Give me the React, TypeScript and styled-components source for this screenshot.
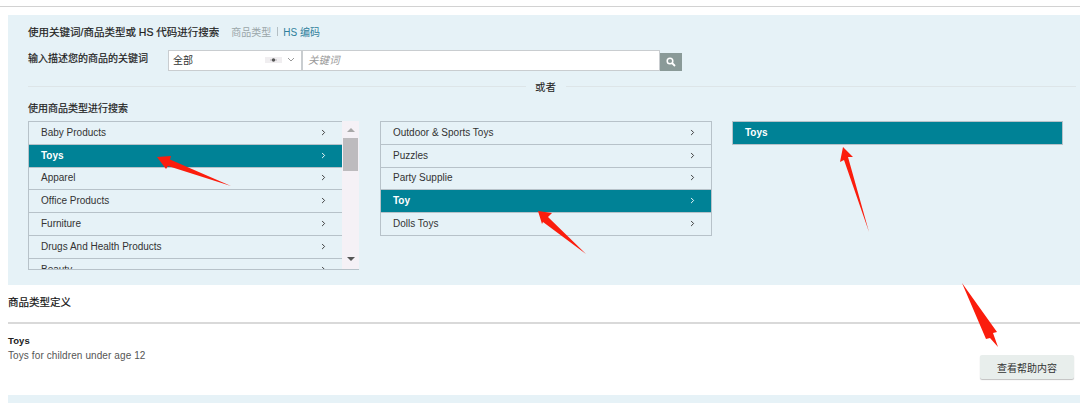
import React from 'react';
import styled, { createGlobalStyle } from 'styled-components';
import { ChevronRight } from 'lucide-react';

const GlobalStyle = createGlobalStyle`
  html, body {
    margin: 0;
    padding: 0;
    background: #fff;
  }
  body {
    font-family: "Liberation Sans", Arial, "Noto Sans CJK SC", sans-serif;
    color: #333;
  }
`;

const Page = styled.div`
  position: relative;
  width: 1080px;
  height: 403px;
  overflow: hidden;
  padding-top: 6px;
  box-sizing: border-box;
`;

const TopRule = styled.div`
  height: 1px;
  background: #d2d2d2;
  margin-bottom: 8px;
`;

const Panel = styled.section`
  box-sizing: border-box;
  height: 270px;
  margin-left: 8px;
  padding: 8px 4px 0 20px;
  background: #e6f2f7;
`;

const TitleRow = styled.div`
  display: flex;
  align-items: center;
  height: 16px;
  font-size: 10px;
`;

const Title = styled.h2`
  margin: 0 12px 0 0;
  font-size: 10.5px;
  font-weight: 400;
  color: #222;
  -webkit-text-stroke: 0.2px #222;
`;

const TabLink = styled.span<{ $active?: boolean }>`
  color: ${(p) => (p.$active ? '#2f7f9c' : '#9aa5a8')};
`;

const TabDivider = styled.span`
  width: 1px;
  height: 9px;
  margin: 0 5px 0 6px;
  background: #b4bfc4;
`;

const SearchRow = styled.div`
  display: flex;
  align-items: flex-start;
  margin-top: 11px;
`;

const SearchLabel = styled.label`
  width: 140px;
  height: 16px;
  margin-top: 1px;
  font-size: 10px;
  line-height: 16px;
  color: #222;
  -webkit-text-stroke: 0.2px #222;
`;

const SelectBox = styled.div`
  box-sizing: border-box;
  display: flex;
  align-items: center;
  width: 134px;
  height: 21px;
  padding: 0 6px 2px 4px;
  background: #fff;
  border: 1px solid #c9cdd0;
  font-size: 10px;
`;

const SelectValue = styled.span`
  flex: 1;
  color: #333;
`;

const SelectMark = styled.svg`
  margin-right: 5px;
`;

const KeywordBox = styled.div`
  box-sizing: border-box;
  width: 358px;
  height: 21px;
  padding-left: 5px;
  background: #fff;
  border: 1px solid #c9cdd0;
  font-size: 10.5px;
  font-style: italic;
  line-height: 19px;
  color: #9a9a9a;
`;

const SearchButton = styled.button`
  display: flex;
  align-items: center;
  justify-content: center;
  width: 22px;
  height: 18px;
  margin-top: 3px;
  padding: 0;
  border: 0;
  background: #8a9a98;
`;

const OrDivider = styled.div`
  display: flex;
  align-items: center;
  height: 14px;
  margin-top: 8px;
  font-size: 10.5px;
  color: #222;
  &::before,
  &::after {
    content: '';
    height: 1px;
    background: #dde5e8;
  }
  &::before {
    width: 498px;
    margin-right: 9px;
  }
  &::after {
    flex: 1;
    margin-left: 10px;
  }
`;

const SectionLabel = styled.div`
  margin-top: 9px;
  height: 14px;
  font-size: 10px;
  line-height: 14px;
  color: #222;
  -webkit-text-stroke: 0.2px #222;
`;

const Columns = styled.div`
  display: grid;
  grid-template-columns: 332px 332px 331px;
  column-gap: 20px;
  align-items: start;
  margin-top: 5px;
`;

const ScrollColumn = styled.div`
  display: flex;
  height: 149px;
  margin-right: 1px;
  overflow: hidden;
  border-bottom: 1px solid #b7c2c9;
  box-sizing: border-box;
`;

const List = styled.ul<{ $scrolled?: boolean }>`
  flex: 1;
  box-sizing: border-box;
  margin: 0;
  padding: 0;
  list-style: none;
  border: 1px solid #b7c2c9;
  ${(p) => (p.$scrolled ? 'border-right: 0; border-bottom: 0;' : '')}
`;

const Row = styled.li<{ $active?: boolean }>`
  box-sizing: border-box;
  display: flex;
  align-items: center;
  justify-content: space-between;
  height: 22.8px;
  padding: 0 14px 1px 12px;
  border-bottom: 1px solid #b7c2c9;
  font-size: 10px;
  font-weight: ${(p) => (p.$active ? 700 : 400)};
  color: ${(p) => (p.$active ? '#fff' : '#333')};
  background: ${(p) => (p.$active ? '#008296' : 'transparent')};
  &:last-child {
    border-bottom: 0;
    height: 22px;
  }
`;

const Scrollbar = styled.div`
  display: flex;
  flex-direction: column;
  align-items: center;
  width: 17px;
  flex-shrink: 0;
  background: #f5f1f6;
`;

const ScrollArrow = styled.div<{ $down?: boolean }>`
  width: 0;
  height: 0;
  margin-top: ${(p) => (p.$down ? '86px' : '7px')};
  border-left: 4px solid transparent;
  border-right: 4px solid transparent;
  ${(p) => (p.$down ? 'border-top: 4px solid #555;' : 'border-bottom: 4px solid #a8a8a8;')}
`;

const ScrollThumb = styled.div`
  width: 15px;
  height: 33px;
  margin-top: 6px;
  background: #bdbbbe;
`;

const DefinitionHead = styled.h3`
  height: 37px;
  margin: 0 0 0 8px;
  border-bottom: 2px solid #d9d9d9;
  box-sizing: content-box;
  font-size: 10.5px;
  font-weight: 400;
  line-height: 34px;
  color: #111;
  -webkit-text-stroke: 0.2px #111;
`;

const DefinitionBody = styled.div`
  display: flex;
  justify-content: space-between;
  align-items: flex-start;
  height: 71px;
  margin-left: 8px;
  padding-right: 6px;
`;

const DefinitionText = styled.div`
  padding-top: 9px;
  font-size: 10px;
  line-height: 15px;
  letter-spacing: 0.1px;
  color: #555;
`;

const DefinitionName = styled.div`
  font-size: 9.5px;
  font-weight: 700;
  color: #222;
`;

const HelpButton = styled.button`
  width: 94px;
  height: 24px;
  margin-top: 31px;
  padding: 0;
  border: 0;
  border-radius: 2px;
  background: #e8eeec;
  box-shadow: 0 1px 1px rgba(0, 0, 0, 0.25);
  font-family: inherit;
  font-size: 10px;
  color: #333;
`;

const BottomPanel = styled.div`
  height: 12px;
  margin-left: 8px;
  background: #e6f2f7;
`;

const Arrows = styled.svg`
  position: absolute;
  left: 0;
  top: 0;
  pointer-events: none;
`;

const categories = ['Baby Products', 'Toys', 'Apparel', 'Office Products', 'Furniture', 'Drugs And Health Products', 'Beauty'];
const subCategories = ['Outdoor & Sports Toys', 'Puzzles', 'Party Supplie', 'Toy', 'Dolls Toys'];

const arrowPoints = [
  '157,157 171,156 170,159.5 231,186 168,166 166,169',
  '538,211 552,213 548,217 586,254 543,222 542,224',
  '843,147 853,157 848,157 869,232 844,160 840,162',
  '962,283 997,332 993,333 998,347 990,338 986,339',
];

const App: React.FC = () => {
  return (
    <Page>
      <GlobalStyle />
      <TopRule />
      <Panel>
        <TitleRow>
          <Title>使用关键词/商品类型或 HS 代码进行搜索</Title>
          <TabLink>商品类型</TabLink>
          <TabDivider />
          <TabLink $active>HS 编码</TabLink>
        </TitleRow>
        <SearchRow>
          <SearchLabel>输入描述您的商品的关键词</SearchLabel>
          <SelectBox>
            <SelectValue>全部</SelectValue>
            <SelectMark width="17" height="8" viewBox="0 0 17 8">
              <rect x="0" y="1" width="17" height="6" fill="#f0eef0" />
              <path d="M5 4h7" stroke="#b5b0b5" />
              <circle cx="8.5" cy="4" r="1.7" fill="#555" />
            </SelectMark>
            <svg width="8" height="6" viewBox="0 0 8 6" fill="none">
              <path d="M1 1l3 3 3-3" stroke="#999" strokeWidth="1" />
            </svg>
          </SelectBox>
          <KeywordBox>关键词</KeywordBox>
          <SearchButton aria-label="搜索">
            <svg width="10" height="10" viewBox="0 0 10 10" fill="none">
              <circle cx="4" cy="4" r="2.8" stroke="#fff" strokeWidth="1.5" />
              <path d="M6 6l3 3" stroke="#fff" strokeWidth="1.8" />
            </svg>
          </SearchButton>
        </SearchRow>
        <OrDivider>或者</OrDivider>
        <SectionLabel>使用商品类型进行搜索</SectionLabel>
        <Columns>
          <ScrollColumn>
            <List $scrolled>
              {categories.map((name) => (
                <Row key={name} $active={name === 'Toys'}>
                  {name}
                  <ChevronRight size={9} strokeWidth={2.5} />
                </Row>
              ))}
            </List>
            <Scrollbar>
              <ScrollArrow />
              <ScrollThumb />
              <ScrollArrow $down />
            </Scrollbar>
          </ScrollColumn>
          <List>
            {subCategories.map((name) => (
              <Row key={name} $active={name === 'Toy'}>
                {name}
                <ChevronRight size={9} strokeWidth={2.5} />
              </Row>
            ))}
          </List>
          <List>
            <Row $active>Toys</Row>
          </List>
        </Columns>
      </Panel>
      <DefinitionHead>商品类型定义</DefinitionHead>
      <DefinitionBody>
        <DefinitionText>
          <DefinitionName>Toys</DefinitionName>
          Toys for children under age 12
        </DefinitionText>
        <HelpButton>查看帮助内容</HelpButton>
      </DefinitionBody>
      <BottomPanel />
      <Arrows width="1080" height="403" viewBox="0 0 1080 403">
        {arrowPoints.map((points) => (
          <polygon key={points} points={points} fill="#fb1d0d" />
        ))}
      </Arrows>
    </Page>
  );
};

export default App;
